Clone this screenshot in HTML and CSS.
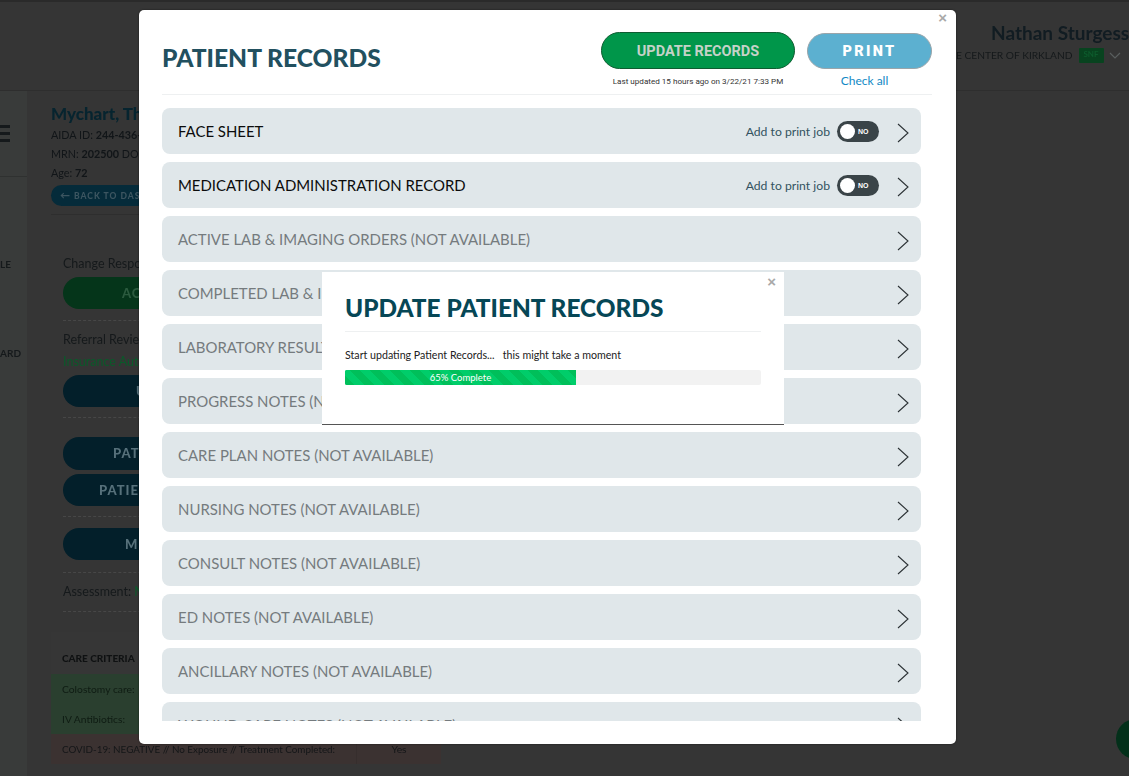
FILE: index.html
```html
<!DOCTYPE html>
<html lang="en">
<head>
<meta charset="utf-8">
<title>Patient Records</title>
<link rel="stylesheet" href="styles.css">
</head>
<body>
<div class="app">
  <header class="topbar">
    <div class="user">
      <div class="user-name">Nathan Sturgess</div>
      <div class="facility"><span>E CENTER OF KIRKLAND</span><b class="snf">SNF</b>
        <svg class="caret" width="12" height="7" viewBox="0 0 12 7"><path d="M1 1l5 5 5-5" fill="none" stroke="#5a5f5f" stroke-width="1.2"/></svg>
      </div>
    </div>
  </header>
  <div class="main">
    <aside class="sidebar">
      <div class="side-head"><div class="burger"><i></i><i></i><i></i></div></div>
      <div class="side-link first">LE</div>
      <div class="side-link second">ARD</div>
    </aside>
    <section class="content">
      <div class="patient">
        <h2 class="patient-name">Mychart, Th</h2>
        <p class="meta">AIDA ID: <b>244-436-</b></p>
        <p class="meta">MRN: <b>202500</b> DO</p>
        <p class="meta">Age: <b>72</b></p>
        <div class="back"><span class="back-arrow">←</span> BACK TO DASH</div>
      </div>
      <div class="card">
        <div class="label">Change Respo</div>
        <div class="pill green pad-ac">AC</div>
        <div class="dash d1"></div>
        <div class="label">Referral Revie</div>
        <div class="label link l2">Insurance Aut</div>
        <div class="pill navy pad-u">U</div>
        <div class="dash d2"></div>
        <div class="pill navy pad-pat">PAT</div>
        <div class="pill navy pad-patie">PATIE</div>
        <div class="dash d3"></div>
        <div class="pill navy pad-m">M</div>
        <div class="dash d4"></div>
        <div class="label">Assessment: <span class="link">N</span></div>
        <div class="dash d5"></div>
      </div>
      <div class="criteria">
        <div class="crit-row crit-head">CARE CRITERIA</div>
        <div class="crit-row crit-ok">Colostomy care:</div>
        <div class="crit-row crit-ok">IV Antibiotics:</div>
        <div class="crit-row crit-bad"><span class="crit-name">COVID-19: NEGATIVE // No Exposure // Treatment Completed:</span><span class="crit-val">Yes</span></div>
      </div>
    </section>
  </div>
</div>
<div class="chat-bubble"></div>

<div class="modal">
  <span class="close close-outer">×</span>
  <div class="modal-head">
    <h1 class="modal-title">PATIENT RECORDS</h1>
    <div class="actions">
      <div class="action update-col">
        <button class="btn-update">UPDATE RECORDS</button>
        <div class="stamp">Last updated 15 hours ago on 3/22/21 7:33 PM</div>
      </div>
      <div class="action print-col">
        <button class="btn-print">PRINT</button>
        <a class="check-all">Check all</a>
      </div>
    </div>
  </div>
  <div class="records">
    <div class="record on"><span class="rec-label">FACE SHEET</span>
      <span class="print-job">Add to print job</span><span class="toggle"><i class="knob"></i><em>NO</em></span>
      <svg class="chev" width="12" height="20" viewBox="0 0 12 20"><path d="M1 1l10 9-10 9" fill="none" stroke="#2c3235" stroke-width="1.1"/></svg></div>
    <div class="record on"><span class="rec-label">MEDICATION ADMINISTRATION RECORD</span>
      <span class="print-job">Add to print job</span><span class="toggle"><i class="knob"></i><em>NO</em></span>
      <svg class="chev" width="12" height="20" viewBox="0 0 12 20"><path d="M1 1l10 9-10 9" fill="none" stroke="#2c3235" stroke-width="1.1"/></svg></div>
    <div class="record"><span class="rec-label">ACTIVE LAB &amp; IMAGING ORDERS (NOT AVAILABLE)</span>
      <svg class="chev" width="12" height="20" viewBox="0 0 12 20"><path d="M1 1l10 9-10 9" fill="none" stroke="#2c3235" stroke-width="1.1"/></svg></div>
    <div class="record"><span class="rec-label">COMPLETED LAB &amp; IMAGING ORDERS (NOT AVAILABLE)</span>
      <svg class="chev" width="12" height="20" viewBox="0 0 12 20"><path d="M1 1l10 9-10 9" fill="none" stroke="#2c3235" stroke-width="1.1"/></svg></div>
    <div class="record"><span class="rec-label">LABORATORY RESULTS (NOT AVAILABLE)</span>
      <svg class="chev" width="12" height="20" viewBox="0 0 12 20"><path d="M1 1l10 9-10 9" fill="none" stroke="#2c3235" stroke-width="1.1"/></svg></div>
    <div class="record"><span class="rec-label">PROGRESS NOTES (NOT AVAILABLE)</span>
      <svg class="chev" width="12" height="20" viewBox="0 0 12 20"><path d="M1 1l10 9-10 9" fill="none" stroke="#2c3235" stroke-width="1.1"/></svg></div>
    <div class="record"><span class="rec-label">CARE PLAN NOTES (NOT AVAILABLE)</span>
      <svg class="chev" width="12" height="20" viewBox="0 0 12 20"><path d="M1 1l10 9-10 9" fill="none" stroke="#2c3235" stroke-width="1.1"/></svg></div>
    <div class="record"><span class="rec-label">NURSING NOTES (NOT AVAILABLE)</span>
      <svg class="chev" width="12" height="20" viewBox="0 0 12 20"><path d="M1 1l10 9-10 9" fill="none" stroke="#2c3235" stroke-width="1.1"/></svg></div>
    <div class="record"><span class="rec-label">CONSULT NOTES (NOT AVAILABLE)</span>
      <svg class="chev" width="12" height="20" viewBox="0 0 12 20"><path d="M1 1l10 9-10 9" fill="none" stroke="#2c3235" stroke-width="1.1"/></svg></div>
    <div class="record"><span class="rec-label">ED NOTES (NOT AVAILABLE)</span>
      <svg class="chev" width="12" height="20" viewBox="0 0 12 20"><path d="M1 1l10 9-10 9" fill="none" stroke="#2c3235" stroke-width="1.1"/></svg></div>
    <div class="record"><span class="rec-label">ANCILLARY NOTES (NOT AVAILABLE)</span>
      <svg class="chev" width="12" height="20" viewBox="0 0 12 20"><path d="M1 1l10 9-10 9" fill="none" stroke="#2c3235" stroke-width="1.1"/></svg></div>
    <div class="record"><span class="rec-label">WOUND CARE NOTES (NOT AVAILABLE)</span>
      <svg class="chev" width="12" height="20" viewBox="0 0 12 20"><path d="M1 1l10 9-10 9" fill="none" stroke="#2c3235" stroke-width="1.1"/></svg></div>
  </div>
</div>

<div class="dialog">
  <span class="close close-inner">×</span>
  <h2 class="dialog-title">UPDATE PATIENT RECORDS</h2>
  <p class="dialog-text">Start updating Patient Records...&nbsp;&nbsp;&nbsp;this might take a moment</p>
  <div class="progress"><div class="progress-fill" style="width:55.5%">65% Complete</div></div>
</div>
</body>
</html>
```
FILE: styles.css
```css
* { box-sizing: border-box; }
html, body { margin: 0; height: 100%; }
body {
  background: #353535;
  font-family: "Lato", "Liberation Sans", sans-serif;
  color: #101418;
  overflow: hidden;
  position: relative;
}
.app { display: flex; flex-direction: column; height: 776px; border-top: 2px solid #2a2a2a; filter: blur(.5px); }

/* background page */
.topbar {
  height: 89px;
  border-bottom: 1px solid #2e2e2e;
  display: flex;
  justify-content: flex-end;
}
.user { width: 173px; padding-top: 20px; flex: none; overflow: hidden; }
.user-name { font-size: 19px; font-weight: 700; color: #111c22; padding-left: 35px; white-space: nowrap; line-height: 22px; }
.facility {
  display: flex; align-items: center; height: 20px; margin-top: 1px;
  font-size: 10.2px; color: #15191b; white-space: nowrap;
}
.snf { background: #08431f; color: #0d5c2d; font-size: 8px; width: 25px; height: 15px; line-height: 13px; text-align: center; margin-left: 6px; border-radius: 1px; font-weight: 700; }
.caret { margin-left: 5px; }

.main { flex: 1; display: flex; min-height: 0; }
.sidebar { width: 27px; flex: none; background: #393b3a; color: #15191b; font-size: 10px; font-weight: 700; position: relative; overflow: hidden; }
.side-head { height: 86px; border-bottom: 1px solid #2f3130; padding-top: 34px; }
.burger { width: 10px; display: flex; flex-direction: column; gap: 4px; }
.burger i { display: block; height: 3px; background: #15191b; }
.side-link { white-space: nowrap; }
.side-link.first { margin-top: 81px; }
.side-link.second { margin-top: 77px; }

.content { flex: 1; padding: 13px 0 0 24px; min-width: 0; }
.patient { width: 390px; height: 111px; border-bottom: 1px solid #2e2e2e; }
.patient-name { margin: 0; font-size: 17px; line-height: 20px; font-weight: 900; color: #06242f; white-space: nowrap; }
.meta { margin: 0; font-size: 10.8px; line-height: 19px; color: #111518; white-space: nowrap; }
.meta b { font-weight: 700; }
.meta:first-of-type { margin-top: 1px; }
.back {
  width: 200px; height: 21px; margin-top: 3px; border-radius: 11px; background: #052b3a;
  color: #3c5560; font-size: 8.5px; font-weight: 900; letter-spacing: 1px; line-height: 21px; padding-left: 9px; white-space: nowrap;
}
.back-arrow { font-size: 10px; }

.card { width: 390px; padding: 41px 0 0 12px; }
.label { font-size: 12.5px; line-height: 16px; color: #15191b; white-space: nowrap; }
.link { color: #0a5a2a; }
.l2 { margin-top: 6px; }
.pill { height: 32px; width: 360px; border-radius: 16px; font-size: 13px; font-weight: 900; letter-spacing: 1px; line-height: 32px; white-space: nowrap; }
.green { background: #05351a; color: #2b5a3e; margin-top: 5px; }
.navy { background: #031f2a; color: #56707a; }
.pad-ac { padding-left: 59px; }
.pad-u { padding-left: 73px; margin-top: 5px; }
.pad-pat { padding-left: 50px; height: 33px; margin-top: 19px; }
.pad-patie { padding-left: 36px; margin-top: 4px; }
.pad-m { padding-left: 62px; margin-top: 11px; }
.dash { border-top: 1px dashed #474747; width: 360px; }
.d1 { margin: 11px 0 11px; }
.d2 { margin-top: 10px; }
.d3 { margin-top: 10px; }
.d4 { margin: 12px 0 11px; }
.d5 { margin-top: 11px; }
.criteria { width: 390px; margin-top: 20px; font-size: 10.3px; color: #141618; }
.crit-row { height: 30px; line-height: 30px; padding-left: 11px; white-space: nowrap; display: flex; }
.crit-head { height: 42px; line-height: 52px; font-weight: 900; background: #363636; color: #0f1112; font-size: 10px; }
.crit-ok { background: #2a3f2f; color: #0f1c13; }
.crit-bad { background: #3b3231; }
.crit-name { width: 294px; flex: none; font-size: 9.85px; }
.crit-val { width: 85px; text-align: center; border-left: 1px solid #362e2d; color: #141618; }

.chat-bubble { position: absolute; left: 1116px; top: 719px; width: 40px; height: 40px; border-radius: 50%; background: #03301a; }

/* records modal */
.modal {
  position: absolute; left: 139px; top: 10px; width: 817px; height: 734px;
  background: #fff; border-radius: 5px; padding: 0 24px 23px 23px;
  display: flex; flex-direction: column;
  box-shadow: 0 0 2px rgba(0,0,0,.6);
}
.close { position: absolute; color: #a9a9a9; font-size: 15px; line-height: 15px; font-family: "Liberation Sans", sans-serif; font-weight: 700; }
.close-outer { right: 9px; top: 0; }
.modal-head { height: 85px; border-bottom: 1px solid #eef0f1; display: flex; justify-content: space-between; flex: none; }
.modal-title { margin: 0; padding-top: 34px; font-size: 24.6px; line-height: 28px; font-weight: 900; color: #22505f; }
.actions { display: flex; gap: 12px; padding-top: 22px; }
.action { display: flex; flex-direction: column; align-items: center; }
.btn-update {
  width: 194px; height: 37px; border: 1px solid #0e5c31; border-radius: 19px; background: #00964a;
  color: #c5d2c8; font: 700 14.5px/1 Roboto, sans-serif; padding: 3px 0 0;
}
.btn-print {
  width: 125px; height: 36px; margin-top: 1px; border: 1px solid #9aa5aa; border-radius: 18px; background: #5cb0d0;
  color: #fff; font: 900 14.5px/1 Roboto, sans-serif; letter-spacing: 2.3px; padding: 3px 0 0;
}
.stamp { font: 400 8.1px/12px Roboto, sans-serif; color: #333; margin-top: 6px; }
.check-all { font-size: 12px; line-height: 12px; color: #1189c5; margin-top: 6px; padding-right: 10px; }

.records {
  flex: 1; min-height: 0; overflow: hidden; margin-top: 13px; padding-right: 11px;
  display: flex; flex-direction: column; gap: 8px;
}
.record {
  height: 46px; flex: none; background: #e0e7ea; border-radius: 8px; padding: 0 12px 0 16px;
  display: flex; align-items: center;
}
.rec-label { font-size: 14.95px; color: #757b7e; margin-right: auto; white-space: nowrap; padding-bottom: 1px; }
.on .rec-label { color: #0c0c0c; }
.print-job { font-size: 12.2px; color: #33535f; margin-right: 7px; }
.toggle { position: relative; width: 42px; height: 21px; border-radius: 11px; background: #3a4448; margin-right: 18px; display: block; }
.knob { position: absolute; left: 3px; top: 3px; width: 15px; height: 15px; border-radius: 50%; background: #fff; }
.toggle em { position: absolute; left: 21px; top: 0; font: 700 7px/21px "Liberation Sans", sans-serif; color: #fff; }
.chev { flex: none; margin-top: 3px; }

/* progress dialog */
.dialog {
  position: absolute; left: 322px; top: 272px; width: 462px; height: 153px;
  background: #fff; padding: 0 23px; border-bottom: 1px solid #555;
}
.close-inner { right: 8px; top: 2px; }
.dialog-title { margin: 0; height: 60px; border-bottom: 1px solid #eef0f1; padding-top: 21px; font-size: 24.4px; line-height: 29px; font-weight: 900; color: #064756; }
.dialog-text { margin: 16px 0 0; font-size: 10.65px; line-height: 13px; color: #222; }
.progress { height: 15px; margin-top: 9px; background: #f2f2f2; border-radius: 2px; overflow: hidden; }
.progress-fill {
  height: 15px; color: #fff; font-size: 9.5px; line-height: 15px; text-align: center;
  background-color: #00cd6a;
  background-image: repeating-linear-gradient(45deg, #00bf5a 0 7px, #00cd6a 7px 14px);
}
```
